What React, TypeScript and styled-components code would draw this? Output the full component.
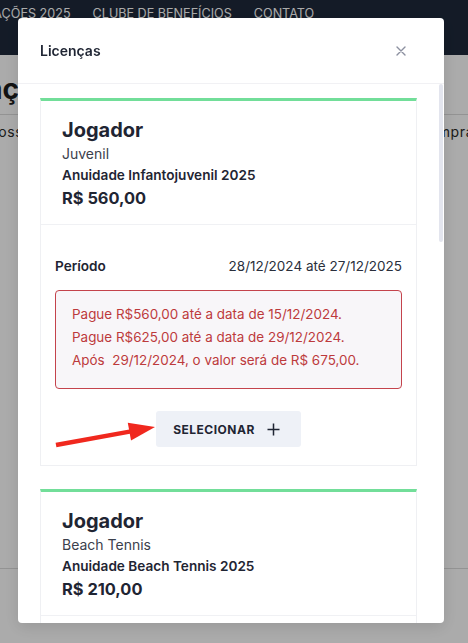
import styled, { createGlobalStyle } from 'styled-components'

const GlobalStyle = createGlobalStyle`
  html, body {
    margin: 0;
    padding: 0;
    height: 100%;
    overflow: hidden;
    background: #ffffff;
    font-family: Inter, 'Noto Sans', sans-serif;
  }
`

type License = {
  category: string
  description: string
  price: string
  start: string
  end: string
  notes: string[]
}

const LICENSES: License[] = [
  {
    category: 'Juvenil',
    description: 'Anuidade Infantojuvenil 2025',
    price: 'R$ 560,00',
    start: '28/12/2024',
    end: '27/12/2025',
    notes: [
      'Pague R$560,00 até a data de 15/12/2024.',
      'Pague R$625,00 até a data de 29/12/2024.',
      'Após  29/12/2024, o valor será de R$ 675,00.',
    ],
  },
  {
    category: 'Beach Tennis',
    description: 'Anuidade Beach Tennis 2025',
    price: 'R$ 210,00',
    start: '28/12/2024',
    end: '27/12/2025',
    notes: [
      'Pague R$210,00 até a data de 15/12/2024.',
      'Após  15/12/2024, o valor será de R$ 250,00.',
    ],
  },
  {
    category: 'Adulto',
    description: 'Anuidade Adulto 2025',
    price: 'R$ 680,00',
    start: '28/12/2024',
    end: '27/12/2025',
    notes: [
      'Pague R$680,00 até a data de 15/12/2024.',
      'Após  15/12/2024, o valor será de R$ 750,00.',
    ],
  },
  {
    category: 'Sênior',
    description: 'Anuidade Sênior 2025',
    price: 'R$ 520,00',
    start: '28/12/2024',
    end: '27/12/2025',
    notes: [
      'Pague R$520,00 até a data de 15/12/2024.',
      'Após  15/12/2024, o valor será de R$ 590,00.',
    ],
  },
  {
    category: 'Profissional',
    description: 'Anuidade Profissional 2025',
    price: 'R$ 890,00',
    start: '28/12/2024',
    end: '27/12/2025',
    notes: [
      'Pague R$890,00 até a data de 15/12/2024.',
      'Após  15/12/2024, o valor será de R$ 960,00.',
    ],
  },
]

function CloseIcon() {
  return (
    <svg width="10" height="10" viewBox="0 0 10 10" fill="none">
      <path d="M1 1L9 9M9 1L1 9" stroke="#8c90a0" strokeWidth="1.4" strokeLinecap="round" />
    </svg>
  )
}

function PlusIcon() {
  return (
    <svg width="13" height="13" viewBox="0 0 13 13" fill="none">
      <path d="M6.5 0.5V12.5M0.5 6.5H12.5" stroke="#1f2533" strokeWidth="1.5" />
    </svg>
  )
}

function LicenseCard({ license }: { license: License }) {
  return (
    <Card>
      <CardHeader>
        <Role>Jogador</Role>
        <Category>{license.category}</Category>
        <Description>{license.description}</Description>
        <Price>{license.price}</Price>
      </CardHeader>
      <CardFooter>
        <PeriodRow>
          <PeriodLabel>Período</PeriodLabel>
          <PeriodValue>
            {license.start} até {license.end}
          </PeriodValue>
        </PeriodRow>
        <Alert>
          {license.notes.map(note => (
            <AlertLine key={note}>{note}</AlertLine>
          ))}
        </Alert>
        <SelectButton type="button">
          SELECIONAR
          <PlusIcon />
        </SelectButton>
      </CardFooter>
    </Card>
  )
}

export default function App() {
  return (
    <>
      <GlobalStyle />
      <Page>
        <NavBar>
          <NavItem>FILIAÇÕES 2025</NavItem>
          <NavItem>CLUBE DE BENEFÍCIOS</NavItem>
          <NavItem>CONTATO</NavItem>
        </NavBar>
        <PageTitle>Filiações</PageTitle>
        <PageRow>
          <RowText $cut="left">Nossas licenças</RowText>
          <RowText $cut="right">Comprar</RowText>
        </PageRow>
        <PageSpacer />
      </Page>
      <Backdrop />
      <Modal>
        <ModalHeader>
          <ModalTitle>Licenças</ModalTitle>
          <CloseButton type="button" aria-label="Fechar">
            <CloseIcon />
          </CloseButton>
        </ModalHeader>
        <ModalBody>
          {LICENSES.map(license => (
            <LicenseCard key={license.description} license={license} />
          ))}
        </ModalBody>
        <ScrollThumb />
      </Modal>
      <Annotation width="110" height="40" viewBox="0 0 110 40">
        <line x1="6" y1="30" x2="81" y2="16.4" stroke="#f0281e" strokeWidth="4.5" />
        <polygon points="105,12 77.8,7.8 81,25.5" fill="#f0281e" />
      </Annotation>
    </>
  )
}

const Page = styled.div`
  display: flex;
  flex-direction: column;
  min-height: 100vh;
  color: #222222;
`

const NavBar = styled.nav`
  height: 55px;
  background: #1e293b;
  display: flex;
  gap: 22px;
  padding-top: 6px;
  box-sizing: border-box;
  margin-left: -28px;
`

const NavItem = styled.span`
  color: #ffffff;
  font-size: 12.6px;
  line-height: 16px;
  white-space: nowrap;
`

const PageTitle = styled.h1`
  margin: 16px -53px 0 -53px;
  font-size: 28px;
  line-height: 36px;
  font-weight: 700;
  color: #1c1c1c;
  padding-bottom: 7px;
  border-bottom: 1px solid #dcdcdc;
`

const PageRow = styled.div`
  display: flex;
  justify-content: space-between;
  padding-top: 8px;
  padding-bottom: 427px;
  border-bottom: 1px solid #dcdcdc;
`

const RowText = styled.span<{ $cut: 'left' | 'right' }>`
  font-size: 14px;
  line-height: 18px;
  letter-spacing: 0.6px;
  color: #2a2a2a;
  white-space: nowrap;
  margin-left: ${p => (p.$cut === 'left' ? '-13px' : '0')};
  margin-right: ${p => (p.$cut === 'right' ? '-12px' : '0')};
`

const PageSpacer = styled.div`
  flex: 1;
`

const Backdrop = styled.div`
  position: fixed;
  inset: 0;
  background: rgba(0, 0, 0, 0.33);
`

const Modal = styled.div`
  position: fixed;
  top: 18px;
  left: 18px;
  width: 426px;
  height: 605px;
  background: #ffffff;
  border-radius: 4px;
  display: flex;
  flex-direction: column;
  overflow: hidden;
  box-shadow: 0 4px 16px rgba(0, 0, 0, 0.12);
`

const ModalHeader = styled.div`
  height: 65px;
  flex-shrink: 0;
  display: flex;
  align-items: center;
  justify-content: space-between;
  padding: 0 34px 0 22px;
  border-bottom: 1px solid #f1f1f4;
`

const ModalTitle = styled.h2`
  margin: 0;
  font-size: 14px;
  font-weight: 600;
  color: #1f2533;
`

const CloseButton = styled.button`
  border: none;
  background: none;
  padding: 4px;
  display: flex;
  cursor: pointer;
`

const ModalBody = styled.div`
  flex: 1;
  overflow-y: auto;
  padding: 14px 27px 14px 22px;
  display: flex;
  flex-direction: column;
  gap: 23px;
  scrollbar-width: none;

  &::-webkit-scrollbar {
    display: none;
  }
`

const ScrollThumb = styled.div`
  position: absolute;
  top: 66px;
  right: 1px;
  width: 4px;
  height: 158px;
  border-radius: 2px;
  background: #e3e5ee;
`

const Card = styled.div`
  flex-shrink: 0;
  border: 1px solid #eff0f3;
  border-top: 3px solid #72de99;
  background: #ffffff;
  color: #1f2533;
`

const CardHeader = styled.div`
  padding: 15px 21px 14px;
  border-bottom: 1px solid #f0f1f4;
  display: flex;
  flex-direction: column;
`

const Role = styled.div`
  font-size: 20px;
  line-height: 28px;
  font-weight: 700;
`

const Category = styled.div`
  font-size: 14px;
  line-height: 20px;
  color: #3b404c;
`

const Description = styled.div`
  font-size: 13.6px;
  line-height: 22px;
  font-weight: 600;
`

const Price = styled.div`
  font-size: 16.4px;
  line-height: 24px;
  font-weight: 700;
`

const CardFooter = styled.div`
  padding: 31px 14px 18px;
  display: flex;
  flex-direction: column;
  align-items: center;
`

const PeriodRow = styled.div`
  align-self: stretch;
  display: flex;
  justify-content: space-between;
  line-height: 20px;
  margin-bottom: 14px;
`

const PeriodLabel = styled.span`
  font-size: 13.6px;
  font-weight: 600;
`

const PeriodValue = styled.span`
  font-size: 13.5px;
  color: #2a2f3b;
`

const Alert = styled.div`
  align-self: stretch;
  border: 1px solid #c4434c;
  border-radius: 4px;
  background: #f8f6f9;
  padding: 12px 16px 16px;
  margin-bottom: 22px;
`

const AlertLine = styled.div`
  font-size: 13.45px;
  line-height: 23px;
  color: #bd3a3c;
  white-space: pre;
`

const SelectButton = styled.button`
  height: 36px;
  display: flex;
  align-items: center;
  gap: 12px;
  padding: 0 21px 0 17px;
  border: none;
  border-radius: 3px;
  background: #eef1f7;
  font-family: Inter, 'Noto Sans', sans-serif;
  font-size: 12px;
  font-weight: 700;
  letter-spacing: 0.5px;
  color: #1f2533;
  cursor: pointer;
`

const Annotation = styled.svg`
  position: fixed;
  left: 50px;
  top: 415px;
  pointer-events: none;
`
